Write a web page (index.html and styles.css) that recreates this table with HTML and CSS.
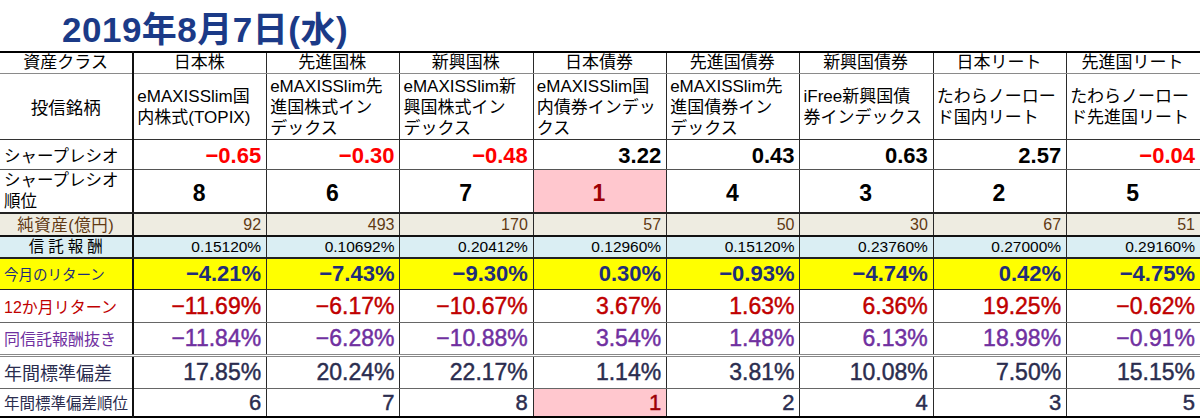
FILE: index.html
```html
<!DOCTYPE html>
<html lang="ja">
<head>
<meta charset="utf-8">
<title>投信比較 2019年8月7日</title>
<link rel="stylesheet" href="styles.css">
</head>
<body>
<h1 class="title">2019年8月7日(水)</h1>
<table class="grid">
  <colgroup>
    <col><col><col><col><col><col><col><col><col>
  </colgroup>
  <tr class="r-head">
    <th class="lbl ctr">資産クラス</th>
    <th>日本株</th><th>先進国株</th><th>新興国株</th><th>日本債券</th>
    <th>先進国債券</th><th>新興国債券</th><th>日本リート</th><th>先進国リート</th>
  </tr>
  <tr class="r-fund">
    <th class="lbl ctr">投信銘柄</th>
    <td>eMAXISSlim国<br>内株式(TOPIX)</td>
    <td>eMAXISSlim先<br>進国株式イン<br>デックス</td>
    <td>eMAXISSlim新<br>興国株式イン<br>デックス</td>
    <td>eMAXISSlim国<br>内債券インデッ<br>クス</td>
    <td>eMAXISSlim先<br>進国債券イン<br>デックス</td>
    <td>iFree新興国債<br>券インデックス</td>
    <td>たわらノーロー<br>ド国内リート</td>
    <td>たわらノーロー<br>ド先進国リート</td>
  </tr>
  <tr class="r-sharpe">
    <th class="lbl">シャープレシオ</th>
    <td class="neg">−0.65</td><td class="neg">−0.30</td><td class="neg">−0.48</td><td>3.22</td>
    <td>0.43</td><td>0.63</td><td>2.57</td><td class="neg">−0.04</td>
  </tr>
  <tr class="r-rank">
    <th class="lbl">シャープレシオ<br>順位</th>
    <td>8</td><td>6</td><td>7</td><td class="top">1</td>
    <td>4</td><td>3</td><td>2</td><td>5</td>
  </tr>
  <tr class="r-assets">
    <th class="lbl ctr">純資産(億円)</th>
    <td>92</td><td>493</td><td>170</td><td>57</td>
    <td>50</td><td>30</td><td>67</td><td>51</td>
  </tr>
  <tr class="r-fee">
    <th class="lbl ctr">信託報酬</th>
    <td>0.15120%</td><td>0.10692%</td><td>0.20412%</td><td>0.12960%</td>
    <td>0.15120%</td><td>0.23760%</td><td>0.27000%</td><td>0.29160%</td>
  </tr>
  <tr class="r-month">
    <th class="lbl">今月のリターン</th>
    <td>−4.21%</td><td>−7.43%</td><td>−9.30%</td><td>0.30%</td>
    <td>−0.93%</td><td>−4.74%</td><td>0.42%</td><td>−4.75%</td>
  </tr>
  <tr class="r-year">
    <th class="lbl">12か月リターン</th>
    <td>−11.69%</td><td>−6.17%</td><td>−10.67%</td><td>3.67%</td>
    <td>1.63%</td><td>6.36%</td><td>19.25%</td><td>−0.62%</td>
  </tr>
  <tr class="r-net">
    <th class="lbl">同信託報酬抜き</th>
    <td>−11.84%</td><td>−6.28%</td><td>−10.88%</td><td>3.54%</td>
    <td>1.48%</td><td>6.13%</td><td>18.98%</td><td>−0.91%</td>
  </tr>
  <tr class="r-sd">
    <th class="lbl">年間標準偏差</th>
    <td>17.85%</td><td>20.24%</td><td>22.17%</td><td>1.14%</td>
    <td>3.81%</td><td>10.08%</td><td>7.50%</td><td>15.15%</td>
  </tr>
  <tr class="r-sdrank">
    <th class="lbl">年間標準偏差順位</th>
    <td>6</td><td>7</td><td>8</td><td class="top">1</td>
    <td>2</td><td>4</td><td>3</td><td>5</td>
  </tr>
</table>
</body>
</html>
```

FILE: styles.css
```css
html, body {
  margin: 0;
  padding: 0;
  background: #fff;
}

body {
  width: 1200px;
  font-family: "Liberation Sans", "Noto Sans CJK JP", sans-serif;
  color: #000;
}

.title {
  margin: 0;
  height: 51px;
  padding: 4px 0 0 62px;
  box-sizing: border-box;
  font-size: 35px;
  line-height: 52px;
  font-weight: bold;
  letter-spacing: 0.5px;
  color: #1b3a87;
  overflow: visible;
}

.grid {
  width: 1200px;
  table-layout: fixed;
  border-collapse: collapse;
  border-top: 2px solid #000;
  border-bottom: 2px solid #000;
}

.grid th,
.grid td {
  border-left: 1px solid #2a2a2a;
  padding: 0 5px 0 3px;
  overflow: hidden;
  white-space: nowrap;
  font-weight: normal;
  text-align: right;
  vertical-align: middle;
}

.grid tr > :first-child {
  border-left: none;
}

.grid tr > :nth-child(2) {
  border-left: 2px solid #111;
}

.grid .lbl {
  text-align: left;
  padding-left: 4px;
}

.grid .ctr {
  text-align: center;
}

/* header row */
.r-head {
  height: 21px;
}
.r-head th {
  text-align: center;
  font-size: 17px;
  line-height: 19px;
  border-bottom: 1px solid #8a8a8a;
}

/* fund names */
.r-fund {
  height: 66px;
}
.r-fund th {
  font-size: 17.5px;
  border-bottom: 1px solid #333;
}
.r-fund td {
  text-align: left;
  font-size: 17px;
  line-height: 21px;
  padding-top: 2px;
  border-bottom: 1px solid #333;
}

/* sharpe ratio */
.r-sharpe {
  height: 30px;
}
.r-sharpe th,
.r-sharpe td {
  border-bottom: 1px solid #555;
  vertical-align: bottom;
}
.r-sharpe th {
  font-size: 16.5px;
  line-height: 26px;
}
.r-sharpe td {
  font-size: 22px;
  font-weight: bold;
  line-height: 26px;
}
.r-sharpe .neg {
  color: #ff0000;
}

/* sharpe rank */
.r-rank {
  height: 44px;
}
.r-rank th,
.r-rank td {
  border-bottom: 2px solid #222;
}
.r-rank th {
  font-size: 16.5px;
  line-height: 21px;
}
.r-rank td {
  text-align: center;
  font-size: 23px;
  font-weight: bold;
  padding-top: 6px;
}

.grid .top {
  background: #ffc7ce;
  color: #9c0006;
}

/* net assets */
.r-assets {
  height: 23px;
  background: #eeece1;
  color: #603913;
}
.r-assets th,
.r-assets td {
  border-bottom: 2px solid #111;
}
.r-assets th {
  font-size: 16.5px;
  line-height: 20px;
  letter-spacing: 0.5px;
}
.r-assets td {
  font-size: 16px;
  line-height: 20px;
}

/* fee */
.r-fee {
  height: 22px;
  background: #daeef3;
}
.r-fee th,
.r-fee td {
  border-bottom: 2px solid #222;
}
.r-fee th {
  font-size: 15.5px;
  line-height: 20px;
  letter-spacing: 4px;
  text-indent: 4px;
}
.r-fee td {
  font-size: 15.5px;
  line-height: 20px;
}

/* this month */
.r-month {
  height: 31px;
  background: #ffff00;
  color: #1f2d7a;
}
.r-month th,
.r-month td {
  border-bottom: 1px solid #222;
}
.r-month th {
  font-size: 14.5px;
}
.r-month td {
  font-size: 22px;
  font-weight: bold;
  line-height: 26px;
}

/* 12 months */
.r-year {
  height: 33px;
  color: #c00000;
}
.r-year th,
.r-year td {
  border-bottom: 1px solid #666;
}
.r-year th {
  font-size: 16px;
}
.r-year td {
  font-size: 23px;
  line-height: 28px;
  -webkit-text-stroke: 0.45px currentColor;
}

/* without fee */
.r-net {
  height: 33px;
  color: #7030a0;
}
.r-net th,
.r-net td {
  border-bottom: 3px double #888;
}
.r-net th {
  font-size: 16px;
}
.r-net td {
  font-size: 23px;
  line-height: 28px;
  -webkit-text-stroke: 0.45px currentColor;
}

/* standard deviation */
.r-sd {
  height: 33px;
  color: #2b2d4f;
}
.r-sd th,
.r-sd td {
  border-bottom: 1px solid #666;
}
.r-sd th {
  font-size: 18px;
}
.r-sd td {
  font-size: 23px;
  line-height: 28px;
  -webkit-text-stroke: 0.45px currentColor;
}

/* sd rank */
.r-sdrank {
  height: 29px;
  color: #2b2d4f;
}
.r-sdrank th {
  font-size: 15.5px;
  vertical-align: top;
  padding-top: 2px;
}
.r-sdrank td {
  font-size: 22px;
  line-height: 26px;
  vertical-align: bottom;
  -webkit-text-stroke: 0.45px currentColor;
}
```
